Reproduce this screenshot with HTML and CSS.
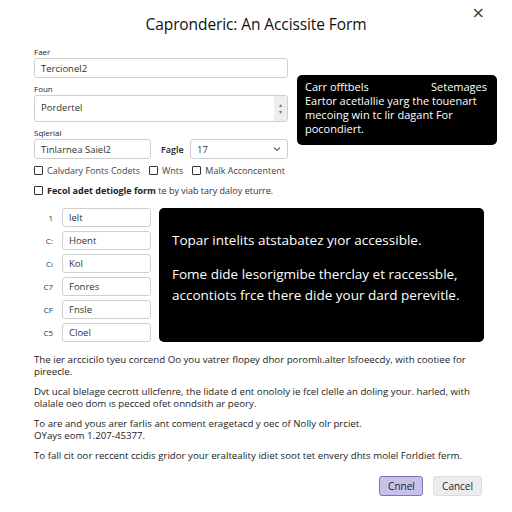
FILE: index.html
```
<!DOCTYPE html>
<html>
<head>
<meta charset="utf-8">
<link rel="stylesheet" href="styles.css">
</head>
<body>
<div class="page">
  <h1 class="title">Capronderic: An Accissite Form</h1>
  <button class="close" aria-label="Close">×</button>

  <div class="top">
    <div class="form">
      <label class="lbl">Faer</label>
      <div class="input wide">Tercionel2</div>
      <label class="lbl">Foun</label>
      <div class="input area">Pordertel<span class="spin"><span>▴</span><span>▾</span></span></div>
      <label class="lbl">Sqlerial</label>
      <div class="row3">
        <div class="input half">Tinlarnea Saiel2</div>
        <span class="inlbl">Fagle</span>
        <div class="input sel">17<svg class="chev" width="8" height="6" viewBox="0 0 8 6"><path d="M1 1.5 L4 4.5 L7 1.5" fill="none" stroke="#666" stroke-width="1.2"/></svg></div>
      </div>
      <div class="checks">
        <span class="chk"><span class="box"></span>Calvdary Fonts Codets</span>
        <span class="chk"><span class="box"></span>Wnts</span>
        <span class="chk"><span class="box"></span>Malk Acconcentent</span>
      </div>
      <div class="checks two">
        <span class="chk"><span class="box"></span><b>Fecol adet detiogle form</b>&nbsp;te by viab tary daloy eturre.</span>
      </div>
    </div>
    <div class="tip">
      <div class="tiprow"><span>Carr offtbels</span><span>Setemages</span></div>
      <div>Eartor acetlallie yarg the touenart mecoing win tc lir dagant For pocondiert.</div>
    </div>
  </div>

  <div class="mid">
    <div class="list">
      <div class="item"><span class="num">1</span><div class="input li">lelt</div></div>
      <div class="item"><span class="num">C:</span><div class="input li">Hoent</div></div>
      <div class="item"><span class="num">Cı</span><div class="input li">Kol</div></div>
      <div class="item"><span class="num">C7</span><div class="input li">Fonres</div></div>
      <div class="item"><span class="num">CF</span><div class="input li">Fnsle</div></div>
      <div class="item"><span class="num">C5</span><div class="input li">Cloel</div></div>
    </div>
    <div class="panel">
      <p>Topar intelits atstabatez yıor accessible.</p>
      <p>Fome dide lesorigmibe therclay et raccessble, accontiots frce there dide your dard perevitle.</p>
    </div>
  </div>

  <div class="text">
    <p>The ier arccicilo tyeu corcend Oo you vatrer flopey dhor poromlı.alter lsfoeecdy, with cootiee for pireecle.</p>
    <p>Dvt ucal blelage cecrott ullcfenre, the lidate d ent onololy ie fcel clelle an doling your. harled, with olalale oeo dom ıs pecced ofet onndsith ar peory.</p>
    <p>To are and yous arer farlis ant coment eragetacd y oec of Nolly olr prciet.<br>OYays eom 1.207-45377.</p>
    <p>To fall cit oor reccent ccidis gridor your eralteality idiet soot tet envery dhts molel Forldiet ferm.</p>
  </div>

  <div class="actions">
    <button class="btn primary">Cnnel</button>
    <button class="btn">Cancel</button>
  </div>
</div>
</body>
</html>
```
FILE: styles.css
```
* { box-sizing: border-box; }
html, body { margin: 0; padding: 0; background: #fff; }
body { font-family: "Open Sans", "Noto Sans", sans-serif; color: #1e1e1e; }
.page { position: relative; width: 512px; height: 512px; padding: 0 0 0 34px; }
.title { margin: 0; padding-top: 13px; height: 44px; text-align: center; font-size: 15.5px; font-weight: 500; letter-spacing: -0.1px; padding-right: 34px; color: #111; }
.close { position: absolute; top: 4px; right: 27px; border: 0; background: none; font-size: 16px; color: #444; padding: 0; line-height: 18px; font-family: "DejaVu Sans", sans-serif; }
.top { display: flex; gap: 9px; }
.form { width: 254px; display: flex; flex-direction: column; }
.lbl { font-size: 8px; line-height: 10px; height: 14px; padding-top: 3px; color: #222; }
.input { border: 1px solid #cfcfcf; border-radius: 3px; background: #fff; font-size: 9.5px; color: #333; padding: 0 6px; display: flex; align-items: center; }
.wide { height: 20px; margin-bottom: 3px; }
.area { height: 27px; margin-bottom: 3px; align-items: flex-start; padding-top: 5px; position: relative; }
.spin { position: absolute; right: 0; top: 0; bottom: 0; width: 13px; background: #eee; display: flex; flex-direction: column; justify-content: center; align-items: center; font-size: 6px; color: #777; line-height: 7px; }
.row3 { display: flex; align-items: center; height: 20px; }
.half { width: 117px; height: 20px; }
.inlbl { font-size: 9px; font-weight: 600; margin-left: 10px; width: 29px; }
.sel { flex: 1; height: 20px; justify-content: space-between; }
.checks { display: flex; gap: 9px; font-size: 9px; color: #444; margin-top: 4px; height: 14px; align-items: center; }
.checks.two { margin-top: 6px; font-size: 9px; color: #333; }
.checks.two b { color: #222; font-weight: 700; }
.chk { display: flex; align-items: center; white-space: nowrap; }
.box { width: 9px; height: 9px; border: 1.3px solid #333; border-radius: 1px; margin-right: 4px; display: inline-block; flex: none; }
.tip { margin-top: 31px; width: 200px; height: 70px; background: #000; color: #fff; border-radius: 5px; padding: 5px 10px 0 8px; font-size: 11px; line-height: 14px; }
.tiprow { display: flex; justify-content: space-between; }
.mid { display: flex; gap: 8px; margin-top: 11px; }
.list { width: 117px; display: flex; flex-direction: column; gap: 4px; }
.item { display: flex; align-items: center; height: 19px; }
.num { width: 28px; text-align: right; padding-right: 9px; font-size: 8px; color: #333; }
.li { width: 89px; height: 19px; }
.panel { width: 325px; height: 134px; background: #000; color: #fff; border-radius: 5px; padding: 22px 12px 0 13px; font-size: 13.5px; line-height: 21px; }
.panel p { margin: 0 0 13px; }
.text { margin-top: 12px; width: 450px; font-size: 9.7px; line-height: 12px; color: #222; }
.text p { margin: 0 0 8px; }
.actions { display: flex; justify-content: flex-end; gap: 10px; margin-top: 14px; padding-right: 30px; }
.btn { font-family: "Open Sans", sans-serif; font-size: 10px; height: 20px; padding: 0 8px; border: 1px solid #ddd; background: #ececec; border-radius: 3px; color: #222; }
.btn.primary { background: #c7c0ea; border-color: #7f75b5; width: 44px; }
```
